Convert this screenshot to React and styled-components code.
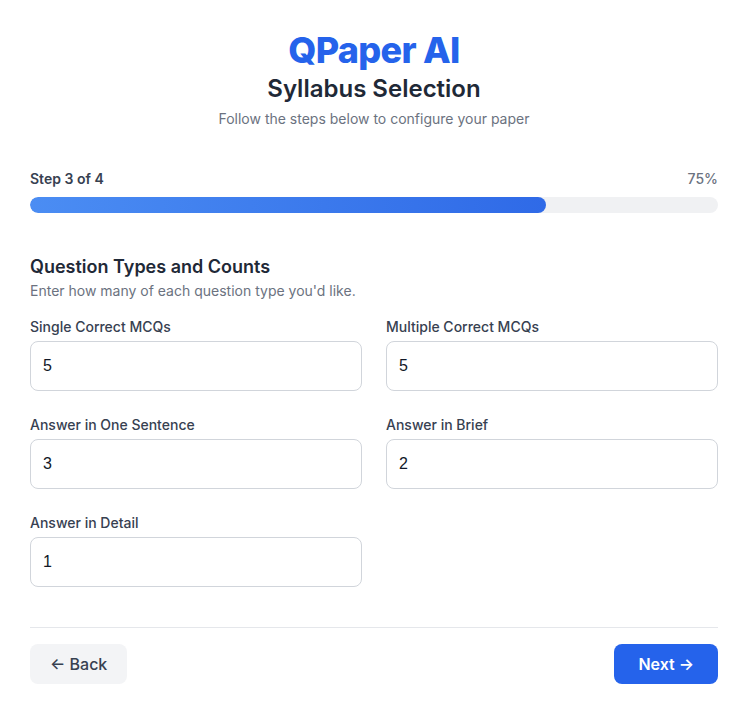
import React, { useState } from "react";
import styled, { createGlobalStyle } from "styled-components";

const GlobalStyle = createGlobalStyle`
  body {
    margin: 0;
    background: #ffffff;
    font-family: Inter, "Noto Sans", sans-serif;
    color: #1f2937;
  }
  * { box-sizing: border-box; }
`;

const Page = styled.div`
  padding: 30px 29px 30px 30px;
`;

const Header = styled.header`
  text-align: center;
`;

const Brand = styled.h1`
  margin: 0 0 3px;
  font-size: 36px;
  line-height: 40px;
  font-weight: 800;
  color: #2563eb;
  letter-spacing: -0.7px;
`;

const Title = styled.h2`
  margin: 0 0 4px;
  font-size: 24px;
  line-height: 32px;
  font-weight: 600;
  color: #1f2937;
`;

const Subtitle = styled.p`
  margin: 0;
  font-size: 14px;
  line-height: 20px;
  color: #6b7280;
`;

const Progress = styled.section`
  margin-top: 40px;
`;

const ProgressMeta = styled.div`
  display: flex;
  justify-content: space-between;
  font-size: 14px;
  line-height: 20px;
  margin-bottom: 8px;
  span:first-child {
    font-weight: 600;
    color: #374151;
  }
  span:last-child {
    font-weight: 500;
    color: #6b7280;
  }
`;

const Track = styled.div`
  height: 16px;
  border-radius: 9999px;
  background: #f0f1f3;
  overflow: hidden;
`;

const Fill = styled.div`
  height: 100%;
  border-radius: 9999px;
  background: linear-gradient(90deg, #4b8df3, #2f6ae7);
`;

const Section = styled.section`
  margin-top: 40px;
`;

const SectionTitle = styled.h3`
  margin: 0;
  font-size: 18px;
  line-height: 28px;
  font-weight: 600;
  color: #1f2937;
`;

const SectionHint = styled.p`
  margin: 0 0 16px;
  font-size: 14px;
  line-height: 20px;
  color: #6b7280;
`;

const Grid = styled.div`
  display: grid;
  grid-template-columns: 1fr 1fr;
  column-gap: 24px;
  row-gap: 24px;
`;

const Field = styled.label`
  display: flex;
  flex-direction: column;
  gap: 4px;
`;

const Label = styled.span`
  font-size: 14px;
  line-height: 20px;
  font-weight: 500;
  color: #374151;
`;

const Input = styled.input`
  height: 50px;
  width: 100%;
  padding: 0 12px;
  border: 1px solid #d1d5db;
  border-radius: 8px;
  font-family: "Liberation Sans", Arial, sans-serif;
  font-size: 16px;
  color: #111827;
  background: #fff;
  outline: none;
`;

const Footer = styled.footer`
  margin-top: 40px;
  padding-top: 16px;
  border-top: 1px solid #e5e7eb;
  display: flex;
  justify-content: space-between;
`;

const Button = styled.button`
  height: 40px;
  padding: 0 ${(p) => (p.$primary ? "24px" : "20px")};
  border: none;
  border-radius: 8px;
  font-family: Inter, "Noto Sans", sans-serif;
  font-size: 16px;
  font-weight: ${(p) => (p.$primary ? 600 : 500)};
  background: ${(p) => (p.$primary ? "#2563eb" : "#f3f4f6")};
  color: ${(p) => (p.$primary ? "#ffffff" : "#374151")};
  cursor: pointer;
`;

const fields = [
  { key: "single", label: "Single Correct MCQs", value: "5" },
  { key: "multiple", label: "Multiple Correct MCQs", value: "5" },
  { key: "sentence", label: "Answer in One Sentence", value: "3" },
  { key: "brief", label: "Answer in Brief", value: "2" },
  { key: "detail", label: "Answer in Detail", value: "1" },
];

export default function App() {
  const [counts, setCounts] = useState(
    Object.fromEntries(fields.map((f) => [f.key, f.value]))
  );
  const step = 3;
  const total = 4;
  const pct = Math.round((step / total) * 100);

  return (
    <Page>
      <GlobalStyle />
      <Header>
        <Brand>QPaper AI</Brand>
        <Title>Syllabus Selection</Title>
        <Subtitle>Follow the steps below to configure your paper</Subtitle>
      </Header>

      <Progress>
        <ProgressMeta>
          <span>
            Step {step} of {total}
          </span>
          <span>{pct}%</span>
        </ProgressMeta>
        <Track>
          <Fill style={{ width: `${pct}%` }} />
        </Track>
      </Progress>

      <Section>
        <SectionTitle>Question Types and Counts</SectionTitle>
        <SectionHint>Enter how many of each question type you'd like.</SectionHint>
        <Grid>
          {fields.map((f) => (
            <Field key={f.key}>
              <Label>{f.label}</Label>
              <Input
                type="text"
                value={counts[f.key]}
                onChange={(e) =>
                  setCounts({ ...counts, [f.key]: e.target.value })
                }
              />
            </Field>
          ))}
        </Grid>
      </Section>

      <Footer>
        <Button>← Back</Button>
        <Button $primary>Next →</Button>
      </Footer>
    </Page>
  );
}
